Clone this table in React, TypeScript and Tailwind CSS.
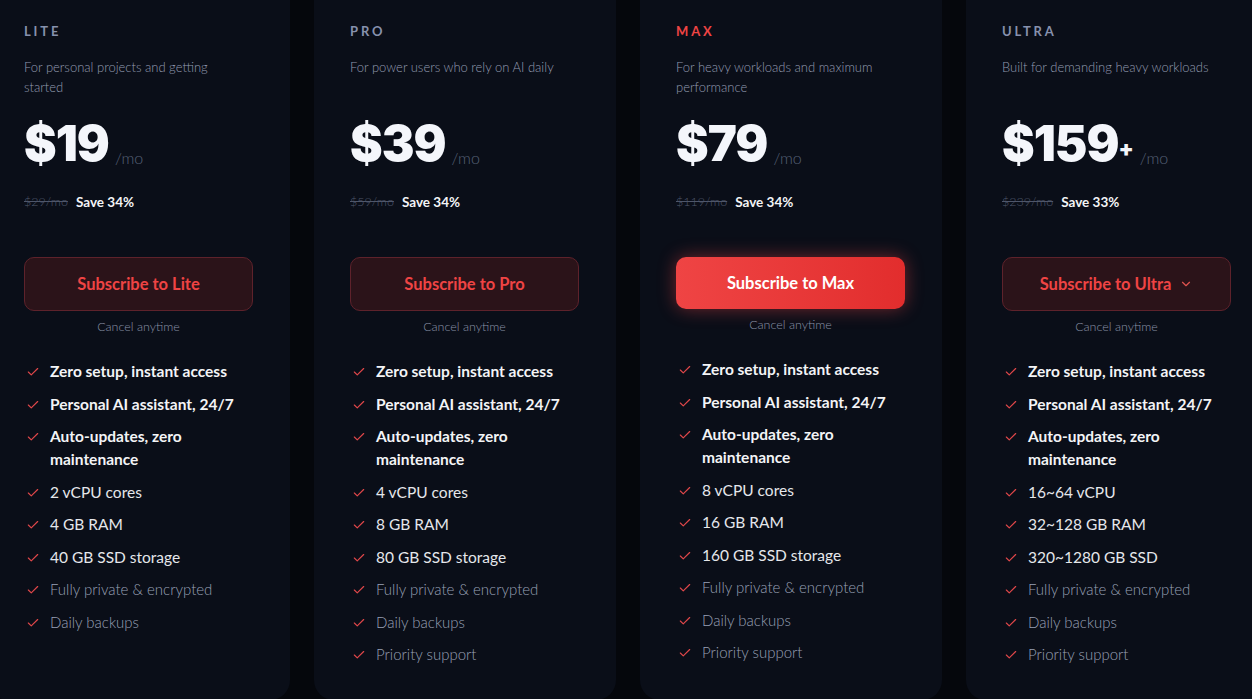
import { Check, ChevronDown } from "lucide-react"

type Feature = { text: string; tone: "strong" | "normal" | "muted" }

interface Plan {
  name: string
  description: string
  price: string
  plus?: boolean
  oldPrice: string
  save: string
  cta: string
  highlight?: boolean
  dropdown?: boolean
  features: Feature[]
}

const base = (cpu: string, ram: string, disk: string, priority: boolean): Feature[] => {
  const list: Feature[] = [
    { text: "Zero setup, instant access", tone: "strong" },
    { text: "Personal AI assistant, 24/7", tone: "strong" },
    { text: "Auto-updates, zero maintenance", tone: "strong" },
    { text: cpu, tone: "normal" },
    { text: ram, tone: "normal" },
    { text: disk, tone: "normal" },
    { text: "Fully private & encrypted", tone: "muted" },
    { text: "Daily backups", tone: "muted" },
  ]
  if (priority) list.push({ text: "Priority support", tone: "muted" })
  return list
}

const plans: Plan[] = [
  {
    name: "LITE",
    description: "For personal projects and getting started",
    price: "$19",
    oldPrice: "$29/mo",
    save: "Save 34%",
    cta: "Subscribe to Lite",
    features: base("2 vCPU cores", "4 GB RAM", "40 GB SSD storage", false),
  },
  {
    name: "PRO",
    description: "For power users who rely on AI daily",
    price: "$39",
    oldPrice: "$59/mo",
    save: "Save 34%",
    cta: "Subscribe to Pro",
    features: base("4 vCPU cores", "8 GB RAM", "80 GB SSD storage", true),
  },
  {
    name: "MAX",
    description: "For heavy workloads and maximum performance",
    price: "$79",
    oldPrice: "$119/mo",
    save: "Save 34%",
    cta: "Subscribe to Max",
    highlight: true,
    features: base("8 vCPU cores", "16 GB RAM", "160 GB SSD storage", true),
  },
  {
    name: "ULTRA",
    description: "Built for demanding heavy workloads",
    price: "$159",
    plus: true,
    oldPrice: "$239/mo",
    save: "Save 33%",
    cta: "Subscribe to Ultra",
    dropdown: true,
    features: base("16~64 vCPU", "32~128 GB RAM", "320~1280 GB SSD", true),
  },
]

const toneClass = {
  strong: "font-bold text-[#f3f4f6]",
  normal: "font-normal text-[#e5e7eb]",
  muted: "font-light text-[15px] text-[#98a0b5]",
}

function PlanCard({ plan }: { plan: Plan }) {
  return (
    <div className="w-[302px] shrink-0 h-[700px] rounded-b-[20px] bg-[#0a0e18] pl-9 pr-[37px] pt-[21px]">
      {/* header */}
      <div
        className={
          "text-[13px] leading-[20px] font-bold tracking-[0.22em] " +
          (plan.highlight ? "text-[#ef4444]" : "text-[#8791ad]")
        }
      >
        {plan.name}
      </div>
      <p className="mt-4 min-h-[40px] max-w-[222px] text-[13px] leading-[20px] font-light text-[#939bb0]">
        {plan.description}
      </p>

      {/* price */}
      <div className="mt-[24px] flex items-end">
        <span
          className="text-[49px] leading-[46px] font-black tracking-[-0.02em] text-[#f4f6fb]"
          style={{ fontFamily: "Inter, sans-serif" }}
        >
          {plan.price}
        </span>
        {plan.plus && (
          <span className="mb-[8px] text-[22px] leading-none font-black text-[#f4f6fb]" style={{ fontFamily: "Inter, sans-serif" }}>
            +
          </span>
        )}
        <span className="ml-[6px] -mb-[1px] text-[16px] leading-[20px] font-light text-[#566076]">/mo</span>
      </div>
      <div className="mt-[27px] flex items-center gap-2 text-[12.5px] leading-4">
        <span className="line-through font-light text-[#4e566a]">{plan.oldPrice}</span>
        <span className="text-[13.5px] font-bold text-[#f3f4f6]">{plan.save}</span>
      </div>

      {/* cta */}
      {plan.highlight ? (
        <button className="mt-[47px] h-[52px] w-full rounded-[10px] bg-gradient-to-r from-[#ef4444] to-[#e22d2d] text-[16.5px] font-bold text-white shadow-[0_0_18px_rgba(239,68,68,0.45)]">
          {plan.cta}
        </button>
      ) : (
        <button className="mt-[47px] h-[54px] w-full flex items-center justify-center gap-2 rounded-[10px] border border-[#5e222b] bg-[#2b1319] text-[16.5px] font-bold text-[#ef4444]">
          {plan.cta}
          {plan.dropdown && <ChevronDown size={14} strokeWidth={2} className="text-[#e0534f]" />}
        </button>
      )}
      <div className="mt-2 text-center text-[12.5px] leading-4 font-light text-[#8a93a8]">Cancel anytime</div>

      {/* features */}
      <ul className="mt-[25px] flex flex-col gap-[9.5px]">
        {plan.features.map((f) => (
          <li key={f.text} className="flex items-start gap-[10px]">
            <Check size={14} strokeWidth={2} className="mt-[5px] ml-[2px] shrink-0 text-[#e0474a]" />
            <span className={"text-[15.5px] leading-[23px] " + toneClass[f.tone]}>{f.text}</span>
          </li>
        ))}
      </ul>
    </div>
  )
}

export default function App() {
  return (
    <div
      className="h-[699px] w-[1252px] overflow-hidden bg-[#05070c]"
      style={{ fontFamily: "Lato, 'Liberation Sans', sans-serif" }}
    >
      <div className="-ml-3 flex gap-6">
        {plans.map((p) => (
          <PlanCard key={p.name} plan={p} />
        ))}
      </div>
    </div>
  )
}
